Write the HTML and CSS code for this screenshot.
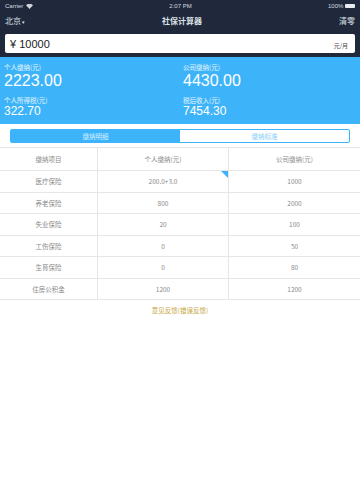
FILE: index.html
```html
<!DOCTYPE html>
<html lang="zh">
<head>
  <meta charset="UTF-8">
  <title>社保计算器</title>
  <link rel="stylesheet" href="styles.css">
</head>
<body>

<div class="top">
  <div class="status">
    <span class="carrier">Carrier <svg width="7" height="5" viewBox="0 0 7 5"><path d="M0 1.2 A5 5 0 0 1 7 1.2 L3.5 5 Z" fill="#cfd4dc"/></svg></span>
    <span class="time">2:07 PM</span>
    <span class="battery">100% <i class="batt"></i></span>
  </div>
  <div class="nav">
    <span class="city">北京<small>▾</small></span>
    <span class="title">社保计算器</span>
    <span class="clear">清零</span>
  </div>
  <div class="salary">
    <span class="amount">¥ 10000</span>
    <span class="unit">元/月</span>
  </div>
</div>

<div class="summary">
  <div class="item">
    <div class="label">个人缴纳(元)</div>
    <div class="num big">2223.00</div>
  </div>
  <div class="item">
    <div class="label">公司缴纳(元)</div>
    <div class="num big">4430.00</div>
  </div>
  <div class="item">
    <div class="label">个人所得税(元)</div>
    <div class="num">322.70</div>
  </div>
  <div class="item">
    <div class="label">税后收入(元)</div>
    <div class="num">7454.30</div>
  </div>
</div>

<div class="tabs">
  <div class="tab on">缴纳明细</div>
  <div class="tab">缴纳标准</div>
</div>

<table class="detail">
  <tr class="head"><td>缴纳项目</td><td>个人缴纳(元)</td><td>公司缴纳(元)</td></tr>
  <tr><td>医疗保险</td><td class="mark">200.0+3.0</td><td>1000</td></tr>
  <tr><td>养老保险</td><td>800</td><td>2000</td></tr>
  <tr><td>失业保险</td><td>20</td><td>100</td></tr>
  <tr><td>工伤保险</td><td>0</td><td>50</td></tr>
  <tr><td>生育保险</td><td>0</td><td>80</td></tr>
  <tr><td>住房公积金</td><td>1200</td><td>1200</td></tr>
</table>

<div class="feedback">意见反馈(错误反馈)</div>

</body>
</html>
```

FILE: styles.css
```css
body {
  margin: 0;
  font-family: "Noto Sans CJK SC", "Liberation Sans", sans-serif;
  background: #fff;
  width: 360px;
  height: 480px;
}

.top {
  background: #1f293b;
  padding: 0 5px 4px;
}

.status {
  height: 12px;
  display: flex;
  justify-content: space-between;
  align-items: center;
  font-family: "Liberation Sans", sans-serif;
  font-size: 6px;
  color: #d6dae0;
}

.carrier svg { vertical-align: middle; margin-left: 1px; }

.batt {
  display: inline-block;
  width: 10px;
  height: 4px;
  background: #e8ebef;
  border-radius: 1px;
  vertical-align: middle;
}

.nav {
  height: 17px;
  display: flex;
  justify-content: space-between;
  align-items: center;
  color: #dde1e6;
  font-size: 8px;
}

.nav small { font-size: 5px; margin-left: 1px; }

.title { font-weight: bold; }

.salary {
  margin-top: 5px;
  height: 19px;
  background: #fff;
  border-radius: 2px;
  display: flex;
  justify-content: space-between;
  align-items: center;
  padding: 0 4px 0 5px;
}

.amount {
  font-family: "Liberation Sans", sans-serif;
  font-size: 11px;
  color: #222;
}

.unit {
  font-size: 6px;
  color: #444;
  padding-top: 4px;
  padding-right: 3px;
}

.summary {
  background: #3db4fa;
  display: grid;
  grid-template-columns: 179px 1fr;
  padding: 5px 4px 6px;
  color: #fff;
}

.label {
  font-size: 6.5px;
  line-height: 10px;
  color: #e8f6ff;
}

.num {
  font-family: "Liberation Sans", sans-serif;
  font-size: 12px;
  line-height: 13px;
}

.num.big {
  font-size: 16px;
  line-height: 17px;
  margin-bottom: 6px;
}

.tabs {
  display: flex;
  margin: 5px 10px 4px;
  height: 14px;
  border: 1px solid #3db4fa;
  border-radius: 2px;
  box-sizing: border-box;
}

.tab {
  flex: 1;
  font-size: 6.5px;
  color: #7fcdf9;
  display: flex;
  justify-content: center;
  align-items: center;
}

.tab.on {
  background: #3db4fa;
  color: #d7efff;
}

.detail {
  width: 360px;
  border-collapse: collapse;
  font-size: 6.5px;
  color: #8a8a8a;
  text-align: center;
}

.detail td {
  border: 1px solid #e6e6e6;
  height: 20.5px;
  padding: 0;
}

.detail tr.head td { height: 22px; }

.detail td:first-child { width: 97px; border-left: none; }
.detail td:nth-child(2) { width: 130px; }
.detail td:last-child { border-right: none; }

.detail td.mark { position: relative; }

.detail td.mark::after {
  content: "";
  position: absolute;
  right: 0;
  top: 0;
  border-style: solid;
  border-width: 0 7px 7px 0;
  border-color: transparent #3db4fa transparent transparent;
}

.feedback {
  text-align: center;
  font-size: 6.5px;
  color: #c6a43c;
  margin-top: 5px;
}
```
